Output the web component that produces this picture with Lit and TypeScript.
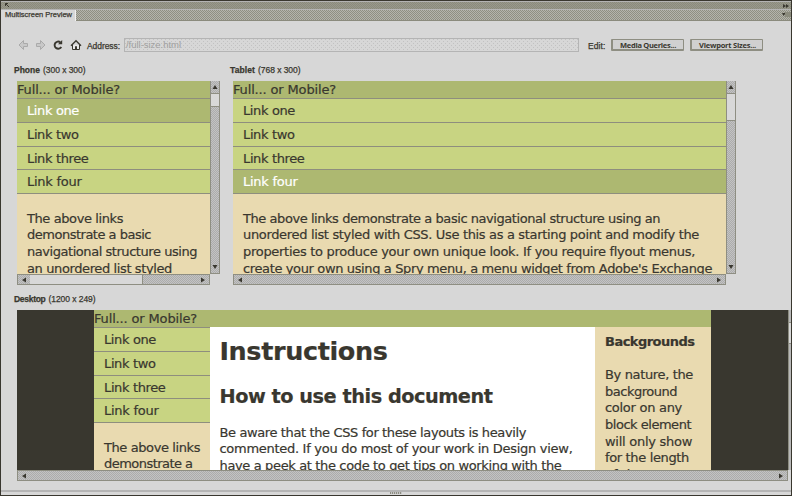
import { LitElement, html, css, svg } from "lit";
import { customElement, property } from "lit/decorators.js";

const BODY = '"DejaVu Sans", Verdana, sans-serif';
const UI = '"Liberation Sans", Arial, sans-serif';
const pen = document.createElement("canvas").getContext("2d")!;

/** A single line of text tracked so that it spans exactly `width` pixels. */
@customElement("text-line")
class TextLine extends LitElement {
  @property() text = "";
  @property({ type: Number }) width = 0;
  @property({ type: Number }) size = 13;
  @property() weight = "400";
  @property() face = BODY;
  static styles = css`
    :host { display: block; white-space: pre; }
    span { display: block; }
  `;
  render() {
    pen.font = `${this.weight} ${this.size}px ${this.face}`;
    const gap = this.width ? (this.width - pen.measureText(this.text).width) / this.text.length : 0;
    return html`<span style="font:${pen.font};line-height:inherit;letter-spacing:${gap.toFixed(3)}px">${this.text}</span>`;
  }
}

const line = (text: string, width: number, size = 13, weight = "400", face = BODY) =>
  html`<text-line .text=${text} .width=${width} .size=${size} .weight=${weight} .face=${face}></text-line>`;

@customElement("scroll-bar")
class ScrollBar extends LitElement {
  @property({ type: Boolean, reflect: true }) vertical = false;
  @property({ type: Number }) thumb = 0;
  @property({ type: Number }) cap = 12;
  static styles = css`
    :host {
      display: flex; box-sizing: border-box; height: 11px; overflow: hidden;
      border: 1px solid #8e8e82; border-left-width: 1px;
      background: repeating-conic-gradient(#acacac 0 25%, #c3c3c3 0 50%) 0 0 / 2px 2px;
    }
    :host([vertical]) { flex-direction: column; width: 10px; height: auto; border-top: 0; }
    .thumb { background: #d8d8d8; border-right: 1px solid #8e8e82; box-sizing: border-box; }
    :host([vertical]) .thumb { border-right: 0; border-top: 1px solid #8e8e82; border-bottom: 1px solid #8e8e82; }
    .grow { flex: 1; }
    .cap { display: grid; place-items: center; flex: none; }
    svg { display: block; fill: #39372f; }
  `;
  render() {
    const v = this.vertical;
    const box = `${v ? "height" : "width"}:${this.cap}px`;
    return html`
      <div class="cap" style=${box}><svg width="6" height="6"><path d=${v ? "M3 1 5.5 5H.5Z" : "M1 3 5 .5V5.5Z"} /></svg></div>
      ${this.thumb ? html`<div class="thumb" style="${v ? "height" : "width"}:${this.thumb}px"></div>` : ""}
      <div class="grow"></div>
      <div class="cap" style=${box}><svg width="6" height="6"><path d=${v ? "M3 5 5.5 1H.5Z" : "M5 3 1 .5V5.5Z"} /></svg></div>
    `;
  }
}

const LINKS: [string, number][] = [["Link one", 52], ["Link two", 51.5], ["Link three", 61.5], ["Link four", 54.5]];

@customElement("nav-list")
class NavList extends LitElement {
  @property({ type: Number }) active = -1;
  static styles = css`
    :host { display: block; border-top: 1px solid #8e8e7e; }
    .row {
      box-sizing: border-box; height: 23.75px; line-height: 23px; padding-left: 10px;
      border-bottom: 1px solid #8e8e7e; background: #c8d482; color: #39372f;
    }
    .on { background: #adb871; color: #fff; -webkit-text-stroke: .2px #fff; }
  `;
  render() {
    return LINKS.map(([t, w], i) => html`<div class="row ${i === this.active ? "on" : ""}">${line(t, w)}</div>`);
  }
}

@customElement("app-root")
class AppRoot extends LitElement {
  static styles = css`
    :host {
      display: flex; flex-direction: column; box-sizing: border-box; width: 792px; height: 496px;
      border: 1px solid #39372f; background: #d7d7d7; color: #39372f; overflow: hidden;
    }
    .title {
      height: 9px; box-sizing: border-box; border-top: 1px solid #b4b4b4; border-bottom: 1px solid #b4b4b4; flex: none;
      display: flex; justify-content: space-between; align-items: center; padding: 0 2px 0 4px;
      background: repeating-conic-gradient(#8b8b7d 0 25%, #99998c 0 50%) 0 0 / 2px 2px;
    }
    .tabs {
      height: 11px; display: flex; flex: none; justify-content: space-between; align-items: stretch;
      background: repeating-conic-gradient(#8f8f82 0 25%, #b4b4ac 0 50%) 0 0 / 2px 2px;
      box-shadow: inset 0 -1px #8b8b7d;
    }
    .tab { width: 75px; box-sizing: border-box; padding-left: 4px; background: #d7d7d7; line-height: 10px; border-right: 1px solid #f0f0f0; }
    .menu { width: 9px; padding-top: 2px; }
    .tools { height: 14px; margin-top: 17px; display: flex; align-items: center; flex: none; line-height: 14px; }
    .tools svg, .title svg, .menu svg { display: block; flex: none; }
    .icons { display: flex; align-items: center; width: 86px; padding-left: 17px; box-sizing: border-box; gap: 6px; }
    .tab, .address, .edit, .caption { -webkit-text-stroke: .25px #39372f; }
    .page, .site { -webkit-text-stroke: .2px #39372f; }
    .address { width: 37px; padding-top: 1px; }
    .field {
      box-sizing: border-box; width: 455px; height: 14px; border: 1px solid #b4b4b4; padding-left: 1px; line-height: 12px; color: #a0a0a0;
      background: radial-gradient(circle at .5px .5px, #c2c2c2 .6px, transparent .7px) 0 0 / 4px 4px,
        radial-gradient(circle at .5px .5px, #c2c2c2 .6px, transparent .7px) 2px 2px / 4px 4px, #d7d7d7;
    }
    .edit { width: 32px; padding: 1px 0 0 9px; box-sizing: border-box; }
    .btn {
      box-sizing: border-box; width: 73px; height: 12px; border: 1px solid #8e8e82; border-width: 1px 1px 2px 2px; margin-right: 6px;
      background: #d0d0d0; padding-left: 7px; line-height: 10px; border-radius: 1px;
    }
    .screens { display: flex; gap: 13px; padding-left: 16px; margin-top: 13px; flex: none; }
    .screen { display: flex; flex-direction: column; }
    .caption { display: flex; gap: 3px; margin-left: -3px; height: 16px; line-height: 10px; flex: none; }
    .view { display: flex; height: 193px; }
    .page { overflow: hidden; background: #e9dab0; }
    .phone { width: 193px; }
    .tablet { width: 493px; }
    .head { background: #adb871; height: 17px; line-height: 17px; box-sizing: border-box; }
    .low { padding-top: 1px; line-height: 16px; }
    .para { padding: 16.6px 0 0 10px; line-height: 16.67px; white-space: nowrap; }
    .desk { padding-left: 16px; margin-top: 9px; flex: none; }
    .stage { display: flex; height: 160px; }
    .dark { background: #39372f; width: 77px; flex: none; }
    .site { width: 617px; height: 160px; overflow: hidden; }
    .cols { display: grid; grid-template-columns: 116px 385px 116px; height: 143px; }
    .side { background: #e9dab0; overflow: hidden; }
    .main { background: #fff; padding-left: 9.5px; overflow: hidden; }
    .h1 { line-height: 30px; margin-top: 9px; }
    .h2 { line-height: 24px; margin-top: 18.6px; }
    .text { line-height: 16.67px; margin-top: 16.2px; }
    .note { padding-left: 10px; line-height: 16.67px; }
    .first { margin: 6.6px 0 16.6px; }
    .edge { width: 3px; box-sizing: border-box; border-left: 1px solid #8e8e82; background: #b8b8b8; padding-top: 12px; }
    .nub { height: 22px; background: #d7d7d7; border-top: 1px solid #8e8e82; border-bottom: 1px solid #8e8e82; box-sizing: border-box; }
    .foot { margin-top: auto; height: 5px; border-top: 2px solid #b4b4b4; box-sizing: border-box; flex: none; display: flex; justify-content: center; }
    .grip { width: 12px; height: 2px; background: repeating-linear-gradient(90deg, #8e8e82 0 1px, #c4c4c4 1px 2px); }
  `;

  private caption(name: string, nameW: number, size: string, sizeW: number) {
    return html`<div class="caption">${line(name, nameW, 8.5, "700", UI)}${line(size, sizeW, 8.5, "400", UI)}</div>`;
  }

  private icons() {
    return html`<div class="icons">
      <svg width="11" height="12" viewBox="0 0 11 12">${svg`<path d="M1 6 5.5 1.5V4.5H9.5V7.5H5.5V10.5Z" fill="#c8c8c8" stroke="#aaa" />`}</svg>
      <svg width="11" height="12" viewBox="0 0 11 12">${svg`<path d="M10 6 5.5 1.5V4.5H1.5V7.5H5.5V10.5Z" fill="#c8c8c8" stroke="#aaa" />`}</svg>
      <svg width="12" height="12" viewBox="0 0 12 12">${svg`<path d="M8.3 3.2A3.6 3.6 0 1 0 9.3 8" fill="none" stroke="#39372f" stroke-width="1.9" /><path d="M6 5.2H10.2V1Z" fill="#39372f" />`}</svg>
      <svg width="12" height="12" viewBox="0 0 12 12">${svg`<path d="M2.5 6V10.5H9.5V6" fill="#e8e8e8" stroke="#39372f" /><path d="M1 6.8 6 1.8 11 6.8" fill="none" stroke="#39372f" stroke-width="1.4" /><path d="M5 7.3H7V11H5Z" fill="#39372f" />`}</svg>
    </div>`;
  }

  render() {
    return html`
      <div class="title">
        <svg width="5" height="5"><path d="M.5 .5 4 4M.5 3V.5H3" stroke="#39372f" fill="none" /></svg>
        <svg width="6" height="4"><path d="M0 0 3 2 0 4ZM3 0 6 2 3 4Z" fill="#39372f" /></svg>
      </div>
      <div class="tabs">
        <div class="tab">${line("Multiscreen Preview", 67, 7.5, "400", UI)}</div>
        <div class="menu"><svg width="9" height="6"><path d="M0 1H3.5L1.7 4Z" fill="#39372f" /><path d="M3 0H9V5H3Z" fill="#8b8b7d" /></svg></div>
      </div>
      <div class="tools">
        ${this.icons()}
        <div class="address">${line("Address:", 33, 8.5, "400", UI)}</div>
        <div class="field">${line("/full-size.html", 55, 9.5, "400", UI)}</div>
        <div class="edit">${line("Edit:", 17.5, 8.5, "400", UI)}</div>
        <div class="btn">${line("Media Queries...", 56, 7.5, "700", '"Open Sans", sans-serif')}</div>
        <div class="btn">${line("Viewport Sizes...", 57, 7.5, "700", '"Open Sans", sans-serif')}</div>
      </div>
      <div class="screens">
        <div class="screen">
          ${this.caption("Phone", 26, "(300 x 300)", 42.5)}
          <div class="view">
            <div class="page phone">
              <div class="head low">${line("Full... or Mobile?", 103)}</div>
              <nav-list .active=${0}></nav-list>
              <div class="para">
                ${line("The above links", 96)}${line("demonstrate a basic", 124)}
                ${line("navigational structure using", 170)}${line("an unordered list styled", 145)}
              </div>
            </div>
            <scroll-bar vertical .thumb=${14}></scroll-bar>
          </div>
          <scroll-bar style="width:193px" .thumb=${113}></scroll-bar>
        </div>
        <div class="screen">
          ${this.caption("Tablet", 25, "(768 x 300)", 42.5)}
          <div class="view">
            <div class="page tablet">
              <div class="head low">${line("Full... or Mobile?", 103)}</div>
              <nav-list .active=${3}></nav-list>
              <div class="para">
                ${line("The above links demonstrate a basic navigational structure using an", 417)}
                ${line("unordered list styled with CSS. Use this as a starting point and modify the", 456)}
                ${line("properties to produce your own unique look. If you require flyout menus,", 452)}
                ${line("create your own using a Spry menu, a menu widget from Adobe's Exchange", 469)}
              </div>
            </div>
            <scroll-bar vertical .thumb=${28}></scroll-bar>
          </div>
          <scroll-bar style="width:493px"></scroll-bar>
        </div>
      </div>
      <div class="desk">
        ${this.caption("Desktop", 31.5, "(1200 x 249)", 47)}
        <div class="stage">
          <div class="dark"></div>
          <div class="site">
            <div class="head">${line("Full... or Mobile?", 103)}</div>
            <div class="cols">
              <div class="side">
                <nav-list></nav-list>
                <div class="para">${line("The above links", 96)}${line("demonstrate a", 88.5)}</div>
              </div>
              <div class="main">
                <div class="h1">${line("Instructions", 168, 25.5, "700")}</div>
                <div class="h2">${line("How to use this document", 273, 19.3, "700")}</div>
                <div class="text">
                  ${line("Be aware that the CSS for these layouts is heavily", 306.5)}
                  ${line("commented. If you do most of your work in Design view,", 353)}
                  ${line("have a peek at the code to get tips on working with the", 342)}
                </div>
              </div>
              <div class="side note">
                <div class="first">${line("Backgrounds", 89.5, 13, "700")}</div>
                ${line("By nature, the", 88)}${line("background", 72)}${line("color on any", 77)}
                ${line("block element", 86)}${line("will only show", 87)}${line("for the length", 84)}${line("of the", 38)}
              </div>
            </div>
          </div>
          <div class="dark"></div>
          <div class="edge"><div class="nub"></div></div>
        </div>
        <scroll-bar style="width:771px"></scroll-bar>
      </div>
      <div class="foot"><div class="grip"></div></div>
    `;
  }
}
